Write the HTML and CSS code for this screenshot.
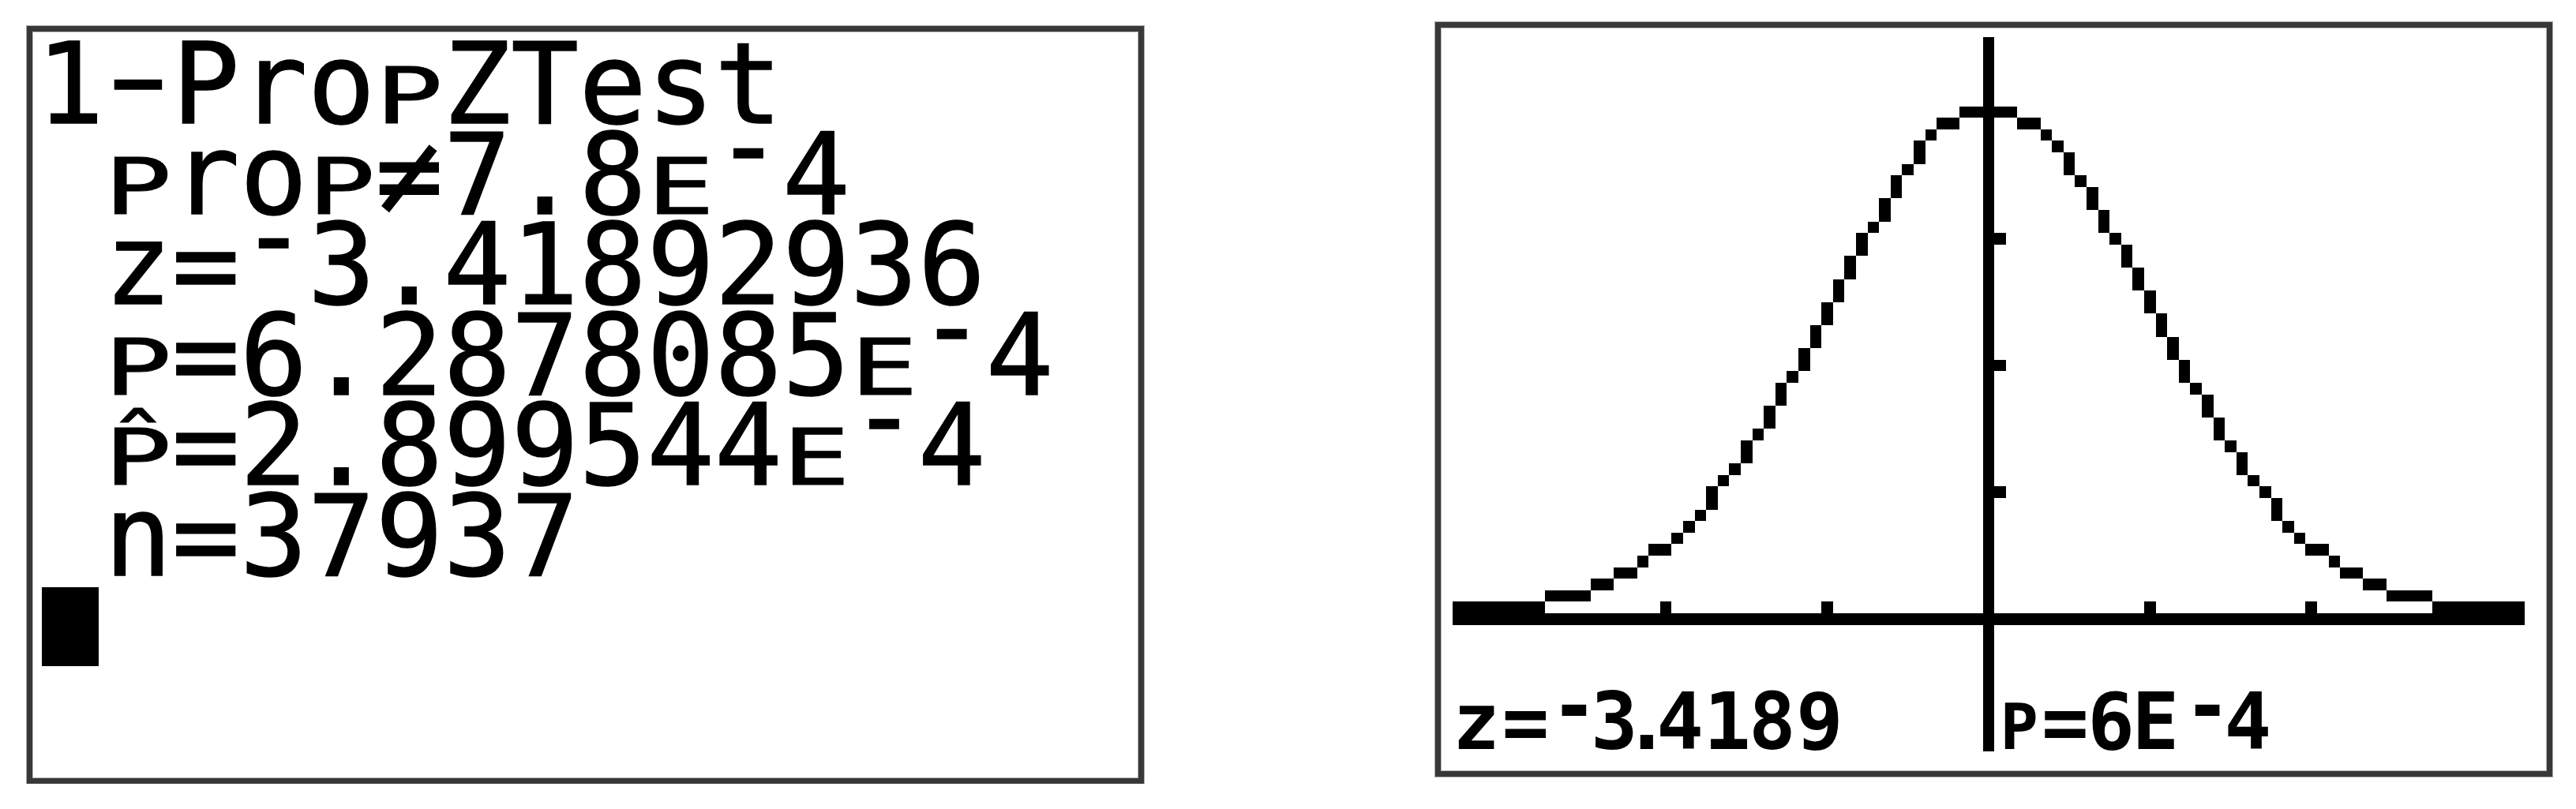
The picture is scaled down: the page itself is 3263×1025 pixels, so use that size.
FILE: index.html
```html
<!DOCTYPE html>
<html lang="en">
<head>
   <meta charset="UTF-8">
   <meta name="viewport" content="width=device-width, initial-scale=1.0">
   <title>1-PropZTest</title>
   <link rel="stylesheet" href="styles.css">
</head>
<body>
   <div class="screens">
      <div class="panel home">
         <div class="line">1<span class="dash">-</span>Pro<span class="sm">p</span>ZTest</div>
         <div class="line"> <span class="sm">p</span>ro<span class="sm">p</span>≠7.8<span class="sm">E</span><span class="neg">-</span>4</div>
         <div class="line"> z=<span class="neg">-</span>3.41892936</div>
         <div class="line"> <span class="sm">p</span>=6.2878085<span class="sm">E</span><span class="neg">-</span>4</div>
         <div class="line"> <span class="sm">p̂</span>=2.899544<span class="sm">E</span><span class="neg">-</span>4</div>
         <div class="line"> n=37937</div>
         <div class="line"><span class="cursor"></span></div>
      </div>

      <div class="panel graph">
         <svg class="plot" viewBox="-1.027 -0.82 95.96 64.52" preserveAspectRatio="none" shape-rendering="crispEdges">
            <g id="curve"></g>
            <!-- axes -->
            <rect x="0" y="50" width="93" height="1"/>
            <rect x="46" y="0" width="1" height="62"/>
            <!-- x ticks -->
            <rect x="4" y="49" width="1" height="1"/>
            <rect x="18" y="49" width="1" height="1"/>
            <rect x="32" y="49" width="1" height="1"/>
            <rect x="60" y="49" width="1" height="1"/>
            <rect x="74" y="49" width="1" height="1"/>
            <rect x="88" y="49" width="1" height="1"/>
            <!-- y ticks -->
            <rect x="47" y="39" width="1" height="1"/>
            <rect x="47" y="28" width="1" height="1"/>
            <rect x="47" y="17" width="1" height="1"/>
            <text class="label" x="0 4.29 8.49 11.99 14.79 17.69 21.79 25.69 29.79" y="61.8 61.8 60.4 61.8 61.8 61.8 61.8 61.8 61.8">z=-3.4189</text>
            <text class="label" x="47.5 51.09 55.09 58.94 63.44 66.96" y="61.8 61.8 61.8 61.8 60.4 61.8"><tspan class="cap">p</tspan>=6E-4</text>
         </svg>
      </div>
   </div>

<script>
const ns = 'http://www.w3.org/2000/svg'
const curve = document.getElementById('curve')

// rows above the x axis for each column, peak is 44 rows high
let rows = []
for (let col = 0; col <= 92; col++) {
   let x = (col - 46) / 14
   rows.push(Math.round(44 * Math.exp(-x * x / 2) + 0.4))
}

function pixel(col, row) {
   let dot = document.createElementNS(ns, 'rect')
   dot.setAttribute('x', col)
   dot.setAttribute('y', 50 - row)
   dot.setAttribute('width', 1)
   dot.setAttribute('height', 1)
   curve.appendChild(dot)
}

rows.forEach((row, col) => {
   pixel(col, row)
   if (col == 0) return
   let prev = rows[col - 1]
   // connected mode: fill the rows skipped between two columns
   let lo = Math.min(prev, row)
   let hi = Math.max(prev, row)
   for (let r = lo + 1; r < hi; r++) {
      let t = (r - prev) / (row - prev)
      pixel(t >= 0.5 ? col : col - 1, r)
   }
})
</script>
</body>
</html>
```

FILE: styles.css
```css
body {
    margin: 0;
    background: #fff;
}

.screens {
    display: flex;
    align-items: flex-start;
    gap: 369px;
    padding: 28px 0 0 34px;
}

.panel {
    box-sizing: border-box;
    width: 1415px;
    background: #fff;
    border: 7px solid #383838;
    box-shadow: 0 0 0 1px #a9a9a9, inset 0 0 0 1px #b8b8b8;
}

/* home screen */
.home {
    height: 960px;
    margin-top: 5px;
    padding: 10px 0 0 5px;
    font-family: "DejaVu Sans Mono", monospace;
    font-size: 142.7px;
    line-height: 114.6px;
    color: #000;
    -webkit-text-stroke: 1.5px #000;
}

.line {
    white-space: pre;
}

.sm {
    display: inline-block;
    text-transform: uppercase;
    transform: scaleY(.69);
    transform-origin: 50% 106.7px;
}

.neg {
    display: inline-block;
    transform: translateY(-38px);
}

.dash {
    display: inline-block;
    transform: translateY(-10px) scaleX(1.6);
}

.cursor {
    display: inline-block;
    width: 72px;
    height: 100px;
    margin-left: 7px;
    background: #000;
}

/* graph screen */
.graph {
    height: 956px;
}

.plot {
    display: block;
    width: 1401px;
    height: 942px;
}

.plot rect {
    fill: #000;
}

.label {
    font-family: "DejaVu Sans Mono", monospace;
    font-weight: bold;
    font-size: 6.8px;
    fill: #000;
}

.label .cap {
    font-size: 5.5px;
    text-transform: uppercase;
}
```
